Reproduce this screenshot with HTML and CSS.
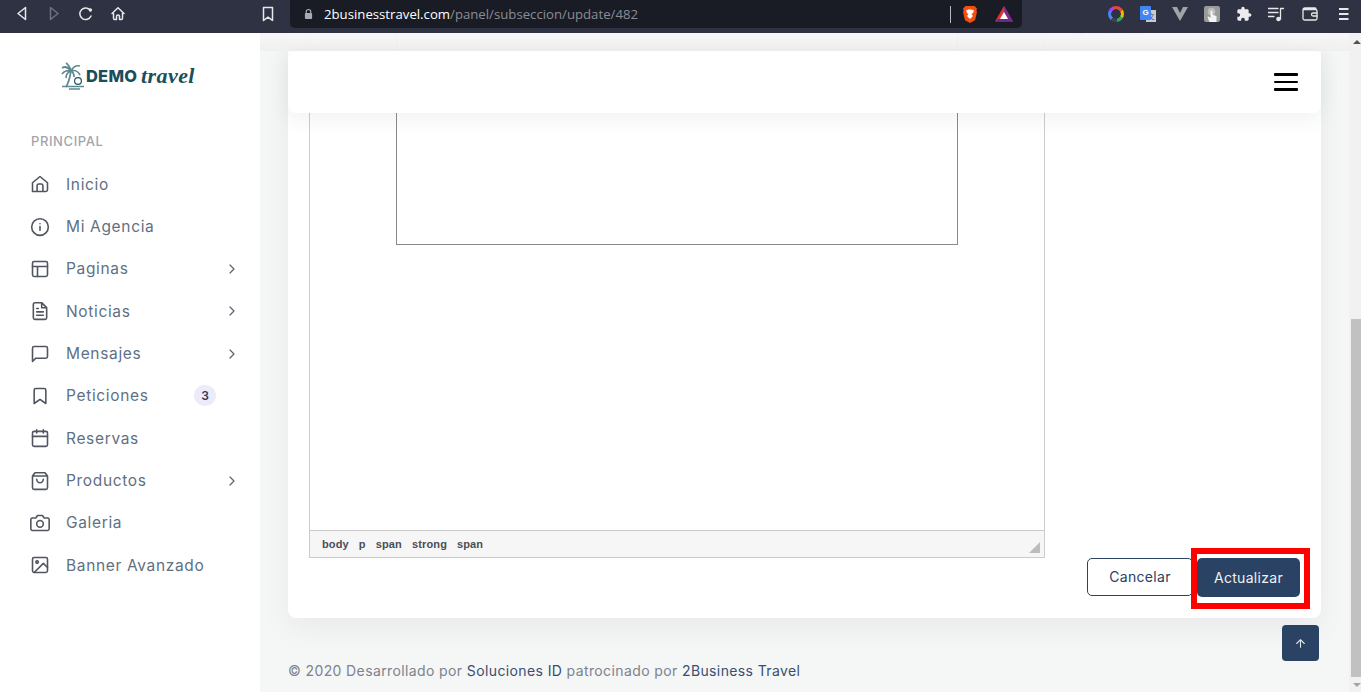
FILE: index.html
```html
<!DOCTYPE html>
<html lang="es">
<head>
<meta charset="utf-8">
<title>2Business Travel</title>
<link rel="stylesheet" href="styles.css">
</head>
<body>
<div class="app">
  <header class="toolbar">
    <div class="tb-group">
      <svg class="tb-ic" viewBox="0 0 16 16"><path d="M11.5 1.5v12L4 7.5z" class="ln"/></svg>
      <svg class="tb-ic dim" viewBox="0 0 16 16"><path d="M4.5 1.5v12L12 7.5z" class="ln"/></svg>
      <svg class="tb-ic" viewBox="0 0 16 16"><path d="M13 10a5.8 5.8 0 1 1-.6-5.6" class="ln"/><circle cx="12.4" cy="4" r="1.7" fill="#e8e8ea"/></svg>
      <svg class="tb-ic" viewBox="0 0 16 16"><path d="M2 7.5 8 1.8l6 5.7M3.5 7v5.2c0 .9.5 1.3 1.2 1.3h1.8v-3a1.5 1.5 0 0 1 3 0v3h1.8c.7 0 1.2-.4 1.2-1.3V7" class="ln"/></svg>
    </div>
    <svg class="tb-ic bookmark" viewBox="0 0 16 16"><path d="M3.5 1.5h9v13L8 11.2 3.500 14.500z" class="ln"/></svg>
    <div class="urlbar">
      <svg class="lock" viewBox="0 0 10 12"><path d="M2.500 5V3.500a2.500 2.500 0 0 1 5 0V5" fill="none" stroke="#a9abb2" stroke-width="1.300"/><rect x="1" y="5" width="8" height="6.500" rx="1" fill="#a9abb2"/></svg>
      <div class="url"><span class="host">2businesstravel.com</span>/panel/subseccion/update/482</div>
      <span class="url-sep"></span>
      <svg class="brave" viewBox="0 0 16 18"><path d="M3.500 1h9l2.500 2.500-.6 2 .6 1.500-2 8.200L8 18l-5-2.800L1 7l.6-1.500L1 3.500z" fill="#f1500f"/><path d="M4 5.500 6.500 4.500h3L12 5.500l-1 2.500-1.500 1L11 11l-3 3-3-3 1.500-2L5 8z" fill="#fff"/></svg>
      <svg class="bat" viewBox="0 0 18 16"><path d="M9 0l9 15.500H0z" fill="#e2342f"/><path d="M9 0l9 15.500-4-.1L9 6z" fill="#7b2a8d"/><path d="M0 15.500h18l-3-2.500H3z" fill="#6a2a8d"/><path d="M9 6l4 7H5z" fill="#fff"/></svg>
    </div>
    <div class="tb-group ext">
      <span class="ring"></span>
      <span class="translate"><span class="tr-blue">G</span><span class="tr-gray">文</span></span>
      <svg class="tb-ic" viewBox="0 0 16 16"><path d="M0 1h5l3 6 3-6h5L8 15z" fill="#a2a3a6"/></svg>
      <svg class="tb-ic" viewBox="0 0 16 16"><rect width="16" height="16" rx="2" fill="#9a9a9a"/><circle cx="7.500" cy="5.500" r="3.800" fill="#bdbdbd"/><path d="M6.500 5.500a1 1 0 0 1 2 0v3.300l4 1.200V16H5.500L3.500 11l1-.5 2 1.500z" fill="#f2f4f7"/></svg>
      <svg class="tb-ic" viewBox="0 0 24 24"><path fill="#ececee" d="M20.500 11H19V7c0-1.100-.9-2-2-2h-4V3.500C13 2.120 11.880 1 10.500 1S8 2.120 8 3.500V5H4c-1.100 0-1.990.9-1.990 2v3.800H3.500c1.490 0 2.700 1.210 2.700 2.700s-1.210 2.700-2.700 2.700H2V20c0 1.100.9 2 2 2h3.800v-1.500c0-1.490 1.210-2.700 2.700-2.700 1.490 0 2.700 1.210 2.700 2.700V22H17c1.100 0 2-.9 2-2v-4h1.500c1.380 0 2.500-1.120 2.500-2.500S21.880 11 20.500 11z"/></svg>
      <svg class="tb-ic" viewBox="0 0 16 16"><path d="M0 2.500h10M0 6.500h10M0 10.500h6" class="ln thin"/><path d="M12.500 13V2.500H16" class="ln thin"/><circle cx="10.500" cy="13" r="2.300" fill="#e8e8ea"/></svg>
      <svg class="tb-ic wide" viewBox="0 0 16 16"><path d="M14 3.500V3a1 1 0 0 0-1-1H3C1.800 2 1 2.800 1 4v8.500c0 1 .7 1.500 1.500 1.500h11c.9 0 1.500-.6 1.500-1.500V5c0-.9-.6-1.500-1.500-1.500H2" class="ln thin"/><path d="M15 7h-4a1.500 1.500 0 0 0 0 3h4" class="ln thin"/></svg>
      <svg class="tb-ic wide" viewBox="0 0 16 16"><path d="M3 3h9.500M3 8h9.500M3 13h9.500" class="ln thick"/></svg>
    </div>
  </header>

  <div class="page">
    <aside class="sidebar">
      <div class="logo">
        <svg class="palm" viewBox="0 0 26 28"><path d="M11 9c-1 6-2 11-5 16M11 9C8 5 5 4 2 6M11 9C8 8 4 9 2 12M11 9c2-4 5-6 9-5M11 9c3-1 7 0 9 4M11 9C10 5 9 3 6 1M11 9c-3 1-5 4-5 7M11 9c2 1 3 3 3 6" fill="none" stroke="#5d8a90" stroke-width="1.700"/><circle cx="18" cy="19" r="3.400" fill="none" stroke="#1f5561" stroke-width="1.200"/><path d="M2 24.500h22M9 27h11" stroke="#5d8a90" stroke-width="1.500"/></svg>
        <span class="logo-demo">DEMO</span>
        <span class="logo-travel">travel</span>
      </div>
      <div class="menu-title">PRINCIPAL</div>
      <nav class="menu">
        <a class="item"><svg class="mi" viewBox="0 0 24 24"><path d="M3 21V10.500L12 3l9 7.500V19a2 2 0 0 1-2 2zM8.500 21v-7a2 2 0 0 1 2-2h3a2 2 0 0 1 2 2v7"/></svg><span>Inicio</span></a>
        <a class="item"><svg class="mi" viewBox="0 0 24 24"><circle cx="12" cy="12" r="10"/><path d="M12 16v-4.500M12 8h.01"/></svg><span>Mi Agencia</span></a>
        <a class="item"><svg class="mi" viewBox="0 0 24 24"><rect x="3" y="3" width="18" height="18" rx="2"/><path d="M3 9h18M9 21V9"/></svg><span>Paginas</span><svg class="chev" viewBox="0 0 24 24"><path d="M9 18l6-6-6-6"/></svg></a>
        <a class="item"><svg class="mi" viewBox="0 0 24 24"><path d="M14 2H6a2 2 0 0 0-2 2v16a2 2 0 0 0 2 2h12a2 2 0 0 0 2-2V8zM14 2v6h6M16 13H8M16 17H8M10 9H8"/></svg><span>Noticias</span><svg class="chev" viewBox="0 0 24 24"><path d="M9 18l6-6-6-6"/></svg></a>
        <a class="item"><svg class="mi" viewBox="0 0 24 24"><path d="M21 15a2 2 0 0 1-2 2H7l-4 4V5a2 2 0 0 1 2-2h14a2 2 0 0 1 2 2z"/></svg><span>Mensajes</span><svg class="chev" viewBox="0 0 24 24"><path d="M9 18l6-6-6-6"/></svg></a>
        <a class="item"><svg class="mi" viewBox="0 0 24 24"><path d="M19 21l-7-5-7 5V5a2 2 0 0 1 2-2h10a2 2 0 0 1 2 2z"/></svg><span>Peticiones</span><span class="badge">3</span></a>
        <a class="item"><svg class="mi" viewBox="0 0 24 24"><rect x="3" y="4" width="18" height="18" rx="2"/><path d="M16 2v4M8 2v4M3 10h18"/></svg><span>Reservas</span></a>
        <a class="item"><svg class="mi" viewBox="0 0 24 24"><path d="M6 2L3 6v14a2 2 0 0 0 2 2h14a2 2 0 0 0 2-2V6l-3-4zM3 6h18M16 10a4 4 0 0 1-8 0"/></svg><span>Productos</span><svg class="chev" viewBox="0 0 24 24"><path d="M9 18l6-6-6-6"/></svg></a>
        <a class="item"><svg class="mi" viewBox="0 0 24 24"><path d="M23 19a2 2 0 0 1-2 2H3a2 2 0 0 1-2-2V8a2 2 0 0 1 2-2h4l2-3h6l2 3h4a2 2 0 0 1 2 2z"/><circle cx="12" cy="13" r="4"/></svg><span>Galeria</span></a>
        <a class="item"><svg class="mi" viewBox="0 0 24 24"><rect x="3" y="3" width="18" height="18" rx="2"/><circle cx="8.500" cy="8.500" r="1.500"/><path d="M21 15l-5-5L5 21"/></svg><span>Banner Avanzado</span></a>
      </nav>
    </aside>

    <main class="main">
      <section class="card">
        <div class="editor">
          <div class="edit-area"><div class="inner-table"></div></div>
          <div class="statusbar">
            <span>body</span><span>p</span><span>span</span><span>strong</span><span>span</span>
            <span class="grip"></span>
          </div>
        </div>
        <div class="side-col">
          <div class="side-label">Estatus</div>
          <div class="actions">
            <button class="btn btn-outline">Cancelar</button>
            <div class="btn-wrap">
              <button class="btn btn-solid">Actualizar</button>
              <span class="highlight"></span>
            </div>
          </div>
        </div>
      </section>
      <footer class="footer">© 2020 Desarrollado por <a>Soluciones ID</a> patrocinado por <a>2Business Travel</a></footer>

      <div class="topbar">
        <div class="topbar-card">
          <span class="burger"><i></i><i></i><i></i></span>
        </div>
      </div>
      <button class="to-top"><svg viewBox="0 0 24 24"><path d="M12 19V5M5 12l7-7 7 7"/></svg></button>
    </main>

    <div class="scrollbar">
      <span class="arrow-up"></span>
      <span class="thumb"></span>
      <span class="arrow-down"></span>
    </div>
  </div>
</div>
</body>
</html>
```

FILE: styles.css
```css
* { box-sizing: border-box; }
html, body { margin: 0; padding: 0; height: 100%; overflow: hidden; }
body { font-family: Inter, "Open Sans", sans-serif; background: #fff; }
.app { width: 1361px; height: 692px; display: flex; flex-direction: column; overflow: hidden; }

/* Browser toolbar */
.toolbar { height: 33px; flex: none; background: #2f3242; display: flex; align-items: flex-start; padding-left: 14px; }
.tb-group { display: flex; gap: 16px; align-items: center; height: 28px; }
.tb-ic { width: 16px; height: 16px; flex: none; display: block; }
.ln { fill: none; stroke: #e8e8ea; stroke-width: 1.500; stroke-linejoin: round; stroke-linecap: round; }
.ln.thin { stroke-width: 1.300; }
.ln.thick { stroke-width: 1.800; stroke-linecap: butt; }
.dim { opacity: .35; }
.bookmark { margin: 6px 0 0 134px; }
.urlbar { width: 732px; height: 28px; margin-left: 14px; background: #1a1c25; border-radius: 0 0 5px 5px; display: flex; align-items: center; padding-left: 14px; }
.lock { width: 9px; height: 12px; flex: none; }
.url { flex: 1; margin-left: 11px; font: 13.190px/28px "Open Sans", sans-serif; color: #8a8c94; white-space: nowrap; }
.host { color: #fff; }
.url-sep { width: 1px; height: 17px; background: #b9bac0; }
.brave { width: 16px; height: 18px; margin-left: 11px; flex: none; }
.bat { width: 18px; height: 16px; margin: 0 9px 0 17px; flex: none; }
.ext { margin-left: 86px; }
.ring { width: 16px; height: 16px; border-radius: 50%; background: radial-gradient(circle, #2f3242 0 4.500px, transparent 5px), conic-gradient(#e8453c 0 17%, #f7b500 17% 33%, #34a853 33% 48%, #37474f 48% 62%, #4285f4 62% 82%, #a142f4 82% 92%, #e8453c 92%); flex: none; }
.translate { width: 16px; height: 16px; position: relative; flex: none; }
.tr-blue { position: absolute; left: 0; top: 0; width: 11px; height: 14px; background: #4285f4; color: #fff; font: bold 8px/14px "Liberation Sans", sans-serif; text-align: center; border-radius: 1px; z-index: 1; }
.tr-gray { position: absolute; right: 0; bottom: 0; width: 10px; height: 12px; background: #c9cacd; color: #555; font: 7px/12px "Noto Sans CJK SC", sans-serif; text-align: center; }
.wide { margin-left: 2px; }

/* Page */
.page { flex: 1; display: flex; min-height: 0; }
.sidebar { width: 260px; flex: none; background: #fff; padding: 0 20px 0 31px; }
.logo { height: 28px; margin: 29px 0 0 29px; display: flex; align-items: center; color: #1b4e5b; white-space: nowrap; }
.palm { width: 26px; height: 28px; flex: none; }
.logo-demo { font: 800 16.500px/1 Inter, sans-serif; letter-spacing: .2px; }
.logo-travel { font: italic 700 22px/1 "Liberation Serif", serif; margin-left: 4px; letter-spacing: .4px; }
.menu-title { margin-top: 43px; height: 16px; font-size: 13px; line-height: 16px; font-weight: 500; color: #a3a5ad; letter-spacing: .6px; }
.menu { margin: 14px 0 0 -1px; display: flex; flex-direction: column; }
.item { height: 42.350px; display: flex; align-items: center; font-size: 15.500px; color: #5f7083; letter-spacing: .66px; white-space: nowrap; }
.mi { width: 20px; height: 20px; flex: none; margin-right: 16px; fill: none; stroke: #51555f; stroke-width: 1.900; stroke-linecap: round; stroke-linejoin: round; }
.chev { width: 16px; height: 16px; margin-left: auto; fill: none; stroke: #5a6370; stroke-width: 1.800; stroke-linecap: round; stroke-linejoin: round; }
.badge { width: 22px; height: 21px; margin-left: auto; margin-right: 24px; border-radius: 50%; background: #ecebfa; color: #2c3a55; font-size: 12px; font-weight: 600; line-height: 21px; text-align: center; letter-spacing: 0; }

.main { flex: 1; min-width: 0; position: relative; background: #f5f6f6; overflow: hidden; display: flex; flex-direction: column; }
.card { width: 1033px; height: 585px; flex: none; margin-left: 28px; background: #fff; border-radius: 0 0 8px 8px; box-shadow: 0 10px 30px rgba(40,50,60,.06); padding: 0 21px 21px; display: flex; }
.editor { width: 736px; flex: none; margin-bottom: 39px; border: 1px solid #ccc; border-top: 0; display: flex; flex-direction: column; }
.edit-area { flex: 1; min-height: 0; }
.inner-table { width: 562px; height: 212px; margin-left: 86px; border: 1px solid #8a8a8a; border-top: 0; }
.statusbar { height: 27px; flex: none; background: #f6f6f6; border-top: 1px solid #ccc; display: flex; align-items: center; gap: 10px; padding-left: 12px; font: 700 11px/1 "Liberation Sans", sans-serif; letter-spacing: .14px; color: #4a4f57; position: relative; }
.grip { position: absolute; right: 4px; bottom: 4px; width: 0; height: 0; border-left: 11px solid transparent; border-bottom: 11px solid #bdbdbd; }
.side-col { flex: 1; margin-left: 30px; display: flex; flex-direction: column; justify-content: space-between; }
.side-label { margin-top: -15px; font-size: 18px; line-height: 20px; font-weight: 500; color: #5a6b7d; letter-spacing: .5px; }
.actions { display: flex; justify-content: flex-end; gap: 4px; height: 39px; }
.btn { height: 38px; border-radius: 5px; padding: 0; font: 400 14px/1 Inter, sans-serif; letter-spacing: .3px; cursor: pointer; }
.btn-outline { width: 106px; background: #fff; color: #2a4263; border: 1px solid #2a4263; }
.btn-wrap { position: relative; width: 103px; height: 39px; }
.btn-solid { width: 103px; height: 39px; background: #2a4263; color: #eef0f4; border: 0; }
.highlight { position: absolute; left: -6px; right: -10px; top: -10px; bottom: -12px; border: 6px solid #ff0000; pointer-events: none; }
.footer { margin: 44px 0 0 28px; font-size: 14px; line-height: 18px; color: #7c838e; letter-spacing: .385px; white-space: nowrap; }
.footer a { color: #3a4f6e; }

/* Overlays */
.topbar { position: absolute; left: 0; right: 0; top: 0; padding: 18px 28px 0; background: linear-gradient(#f7f7f7f5, #efefeff5 18px, transparent 18px); }
.topbar-card { height: 62px; background: #fff; border-radius: 8px; box-shadow: 0 6px 20px rgba(40,50,60,.07); display: flex; align-items: center; justify-content: flex-end; padding-right: 23px; }
.burger { width: 24px; display: flex; flex-direction: column; gap: 5px; }
.burger i { display: block; height: 2.500px; background: #000; border-radius: 1px; }
.to-top { position: absolute; right: 30px; bottom: 31px; width: 37px; height: 36px; border: 0; padding: 0; border-radius: 4px; background: #2a4263; display: flex; align-items: center; justify-content: center; }
.to-top svg { width: 13px; height: 13px; fill: none; stroke: #e6e8ec; stroke-width: 2; stroke-linecap: round; stroke-linejoin: round; }

/* Scrollbar */
.scrollbar { width: 12px; flex: none; background: #f1f1f1; display: flex; flex-direction: column; padding-left: 2px; }
.arrow-up { width: 0; height: 0; margin: 7px 0 0 1.500px; border: 4px solid transparent; border-top: 0; border-bottom: 4px solid #505050; }
.thumb { width: 10px; height: 358px; margin-top: 275px; background: #c1c1c1; }
.arrow-down { width: 0; height: 0; margin: 6px 0 0 1.500px; border: 4px solid transparent; border-bottom: 0; border-top: 4px solid #a3a3a3; }
```
